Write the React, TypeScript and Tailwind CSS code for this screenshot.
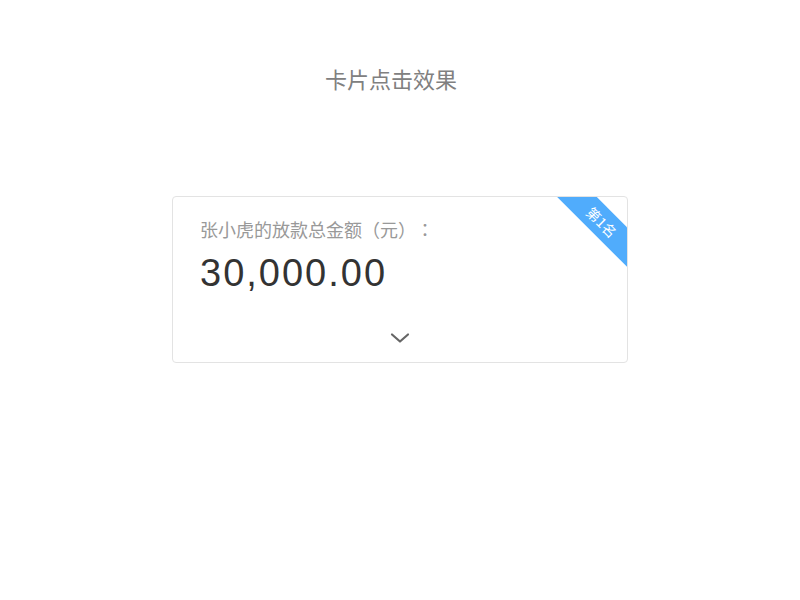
export default function App() {
  return (
    <div
      className="min-h-screen bg-white [text-spacing-trim:space-all]"
      style={{ fontFamily: '"Noto Sans CJK SC", "Liberation Sans", sans-serif' }}
    >
      <h1 className="pt-[64px] pr-[18px] text-center text-[22px] leading-[28px] font-normal text-[#808080]">
        卡片点击效果
      </h1>

      <div className="mt-[104px] flex justify-center">
        <div className="relative w-[456px] overflow-hidden rounded-[4px] border border-[#e3e3e3] bg-white px-[27px] pt-[20px] pb-[18px]">
          <div className="absolute right-[-25px] top-[11px] flex h-[28px] w-[100px] rotate-45 items-center justify-center bg-[#50acfc] text-[14px] leading-none text-white">
            第1名
          </div>

          <p className="text-[18px] leading-[24px] text-[#999999]">
            张小虎的放款总金额（元）
            <span style={{ fontFamily: '"Noto Sans CJK TC", sans-serif' }}>：</span>
          </p>
          <p
            className="mt-[10px] text-[38px] leading-[44px] tracking-[2px] text-[#333333]"
            style={{ fontFamily: '"Liberation Sans", sans-serif' }}
          >
            30,000.00
          </p>

          <div className="mt-[37px] flex justify-center">
            <svg width="20" height="12" viewBox="0 0 20 12" fill="none">
              <path
                d="M2 2.5 L10 9.5 L18 2.5"
                stroke="#666666"
                strokeWidth="2.2"
                strokeLinecap="round"
                strokeLinejoin="round"
              />
            </svg>
          </div>
        </div>
      </div>
    </div>
  );
}
